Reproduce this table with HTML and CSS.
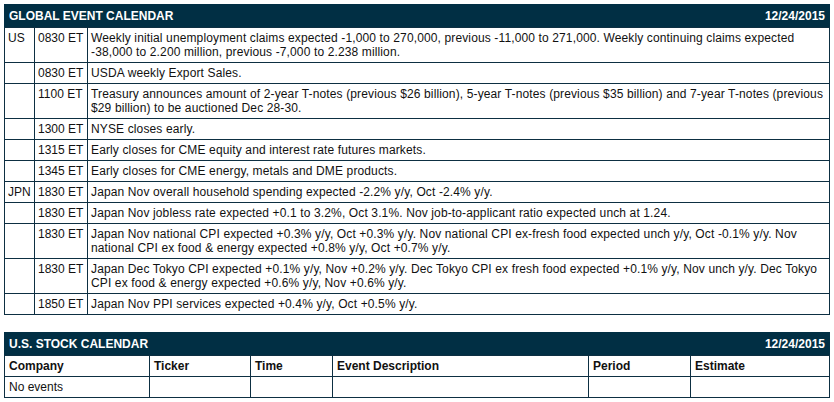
FILE: index.html
```html
<!DOCTYPE html>
<html>
<head>
<meta charset="utf-8">
<link rel="stylesheet" href="styles.css">
</head>
<body>
<section class="cal">
  <div class="cal-head"><span>GLOBAL EVENT CALENDAR</span><span>12/24/2015</span></div>
  <table class="grid events">
    <colgroup><col class="c-country"><col class="c-time"><col></colgroup>
    <tr><td>US</td><td>0830 ET</td><td class="desc">Weekly initial unemployment claims expected -1,000 to 270,000, previous -11,000 to 271,000. Weekly continuing claims expected -38,000 to 2.200 million, previous -7,000 to 2.238 million.</td></tr>
    <tr><td></td><td>0830 ET</td><td class="desc">USDA weekly Export Sales.</td></tr>
    <tr><td></td><td>1100 ET</td><td class="desc">Treasury announces amount of 2-year T-notes (previous $26 billion), 5-year T-notes (previous $35 billion) and 7-year T-notes (previous $29 billion) to be auctioned Dec 28-30.</td></tr>
    <tr><td></td><td>1300 ET</td><td class="desc">NYSE closes early.</td></tr>
    <tr><td></td><td>1315 ET</td><td class="desc">Early closes for CME equity and interest rate futures markets.</td></tr>
    <tr><td></td><td>1345 ET</td><td class="desc">Early closes for CME energy, metals and DME products.</td></tr>
    <tr><td>JPN</td><td>1830 ET</td><td class="desc">Japan Nov overall household spending expected -2.2% y/y, Oct -2.4% y/y.</td></tr>
    <tr><td></td><td>1830 ET</td><td class="desc">Japan Nov jobless rate expected +0.1 to 3.2%, Oct 3.1%. Nov job-to-applicant ratio expected unch at 1.24.</td></tr>
    <tr><td></td><td>1830 ET</td><td class="desc">Japan Nov national CPI expected +0.3% y/y, Oct +0.3% y/y. Nov national CPI ex-fresh food expected unch y/y, Oct -0.1% y/y. Nov national CPI ex food &amp; energy expected +0.8% y/y, Oct +0.7% y/y.</td></tr>
    <tr><td></td><td>1830 ET</td><td class="desc">Japan Dec Tokyo CPI expected +0.1% y/y, Nov +0.2% y/y. Dec Tokyo CPI ex fresh food expected +0.1% y/y, Nov unch y/y. Dec Tokyo CPI ex food &amp; energy expected +0.6% y/y, Nov +0.6% y/y.</td></tr>
    <tr><td></td><td>1850 ET</td><td class="desc">Japan Nov PPI services expected +0.4% y/y, Oct +0.5% y/y.</td></tr>
  </table>
</section>
<section class="cal">
  <div class="cal-head"><span>U.S. STOCK CALENDAR</span><span>12/24/2015</span></div>
  <table class="grid stocks">
    <colgroup><col class="s1"><col class="s2"><col class="s3"><col class="s4"><col class="s5"><col></colgroup>
    <tr><th>Company</th><th>Ticker</th><th>Time</th><th>Event Description</th><th>Period</th><th>Estimate</th></tr>
    <tr><td>No events</td><td></td><td></td><td></td><td></td><td></td></tr>
  </table>
</section>
</body>
</html>
```
FILE: styles.css
```css
html, body {
  margin: 0;
  padding: 0;
  background: #ffffff;
}
body {
  padding: 4px;
  font-family: "Liberation Sans", Arial, sans-serif;
  font-size: 12px;
  color: #111111;
}
.cal + .cal {
  margin-top: 17px;
}
.cal-head {
  display: flex;
  justify-content: space-between;
  align-items: center;
  height: 23px;
  padding: 0 5px;
  background: #012f44;
  color: #ffffff;
  font-weight: bold;
}
.grid {
  width: 100%;
  border-collapse: collapse;
  table-layout: fixed;
}
.grid td, .grid th {
  border: 1px solid #0d2f42;
  padding: 3px 3px;
  vertical-align: top;
  text-align: left;
  line-height: normal;
  font-size: 12px;
  white-space: nowrap;
}
.events .desc {
  white-space: normal;
  letter-spacing: 0.13px;
}
.grid th {
  font-weight: bold;
  color: #111111;
}
.stocks td, .stocks th {
  padding: 3px 4px;
}
.c-country { width: 30px; }
.c-time { width: 53px; }
.s1 { width: 145px; }
.s2 { width: 101px; }
.s3 { width: 82px; }
.s4 { width: 256px; }
.s5 { width: 102px; }
```
